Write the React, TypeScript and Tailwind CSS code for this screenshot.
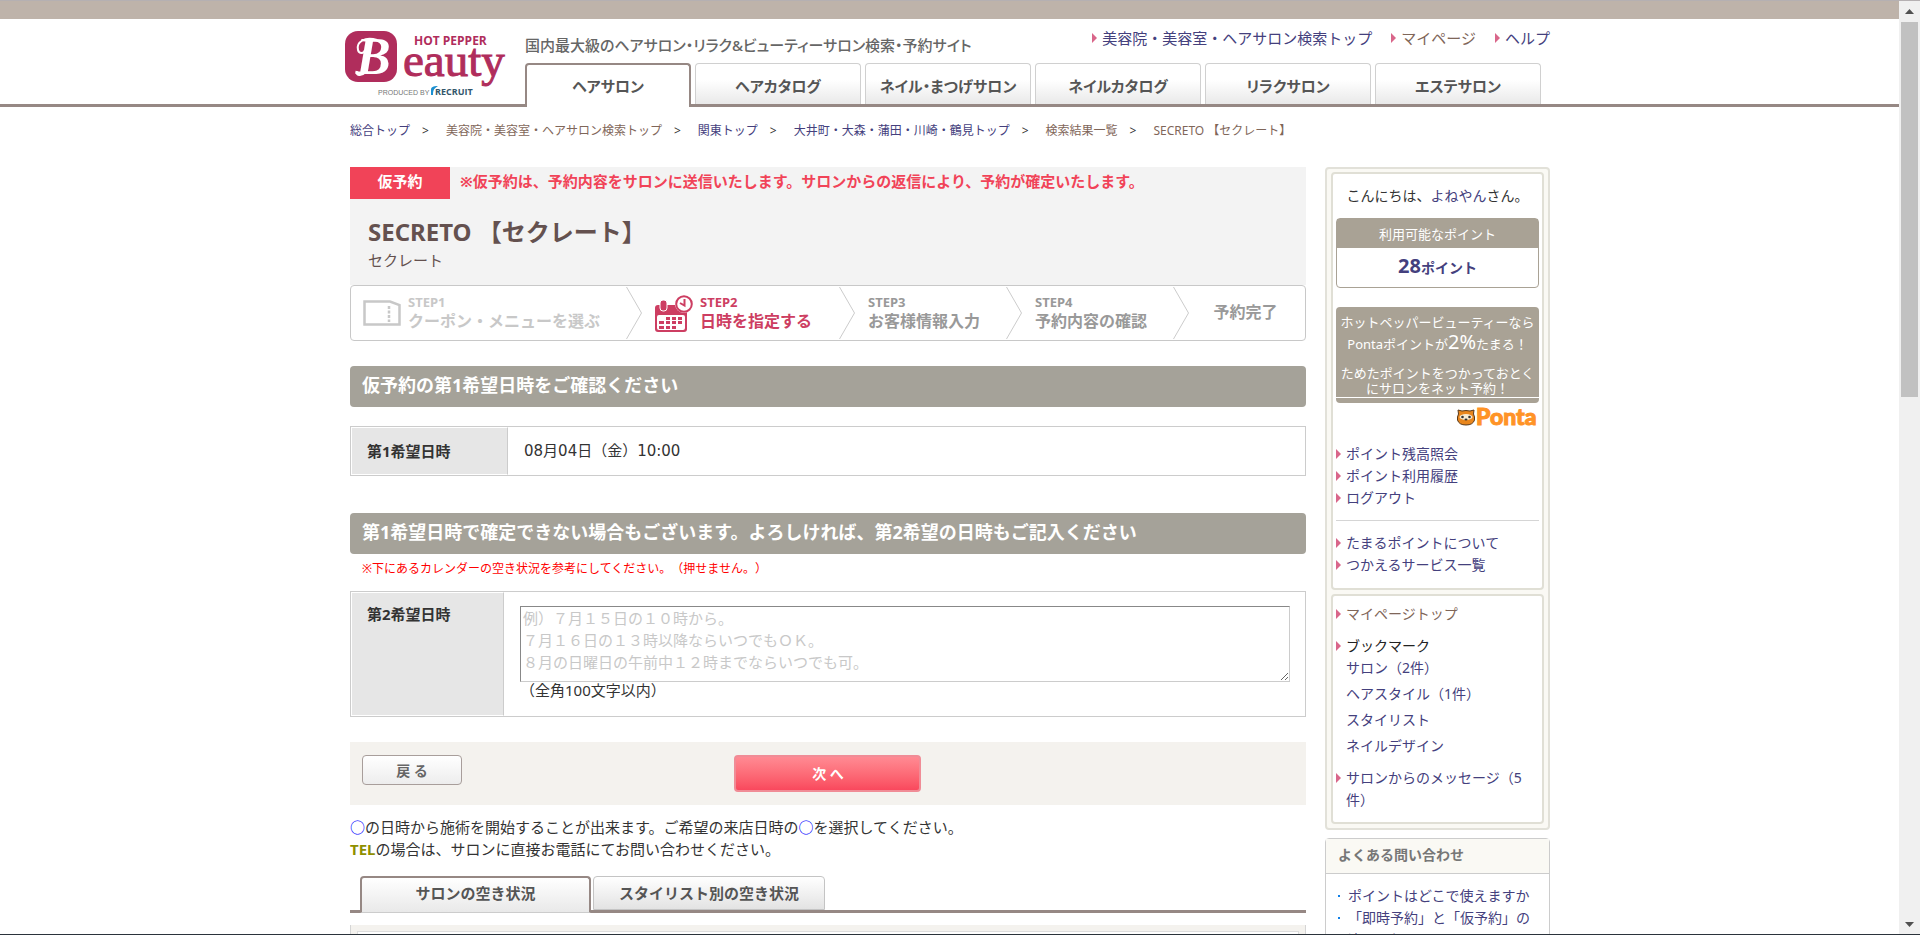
import React from 'react'
import clsx from 'clsx'

const NAV_TABS = [
  'ヘアサロン',
  'ヘアカタログ',
  'ネイル・まつげサロン',
  'ネイルカタログ',
  'リラクサロン',
  'エステサロン',
]

const CRUMBS = [
  { label: '総合トップ', visited: false },
  { label: '美容院・美容室・ヘアサロン検索トップ', visited: true },
  { label: '関東トップ', visited: false },
  { label: '大井町・大森・蒲田・川崎・鶴見トップ', visited: false },
  { label: '検索結果一覧', visited: true },
  { label: 'SECRETO 【セクレート】', visited: true },
]

const PLACEHOLDER = `例）７月１５日の１０時から。
７月１６日の１３時以降ならいつでもＯＫ。
８月の日曜日の午前中１２時までならいつでも可。`

const Arrow = () => (
  <svg width="5" height="10" viewBox="0 0 5 10" className="shrink-0" aria-hidden="true">
    <path d="M0 0L5 5L0 10Z" fill="#d9668a" />
  </svg>
)

const Logo = () => (
  <svg width="166" height="70" viewBox="0 0 166 70" role="img" aria-label="HOT PEPPER Beauty">
    <rect x="0" y="3" width="52" height="51" rx="13" fill="#b02d5c" />
    <text x="11" y="46" fontFamily="Liberation Serif, serif" fontSize="52" fontWeight="700" fontStyle="italic" fill="#fff">B</text>
    <path d="M32 12C20 8 11 14 13 22C14 26 19 26 20 22" fill="none" stroke="#fff" strokeWidth="2" />
    <path d="M20 44C16 48 11 47 12 43" fill="none" stroke="#fff" strokeWidth="3" />
    <text x="69" y="17" fontFamily="Open Sans, sans-serif" fontSize="12" fontWeight="700" fill="#b02d5c">HOT PEPPER</text>
    <text x="58" y="48" fontFamily="Liberation Serif, serif" fontSize="47" fill="#b02d5c" stroke="#b02d5c" strokeWidth="1">eauty</text>
    <text x="33" y="67" fontFamily="Liberation Sans, sans-serif" fontSize="7" fill="#777">PRODUCED BY</text>
    <path d="M86 67V62C86 59 88 58 93 58C90 60 88 61 88 67Z" fill="#1a8fd0" />
    <text x="90" y="67" fontFamily="Open Sans, sans-serif" fontSize="9" fontWeight="700" fill="#33566b">RECRUIT</text>
  </svg>
)

const CouponIcon = () => (
  <svg width="38" height="26" viewBox="0 0 38 26" aria-hidden="true">
    <path d="M1.5 1.5H27L36.500 5V24.500H1.5Z" fill="none" stroke="#c8c8c8" strokeWidth="2.500" />
    <path d="M26 6V22" stroke="#c8c8c8" strokeWidth="2.500" strokeDasharray="3 1.500" />
  </svg>
)

const CalendarIcon = () => (
  <svg width="38" height="37" viewBox="0 0 38 37" aria-hidden="true">
    <rect x="0" y="10" width="32" height="27" rx="3" fill="#cd3e62" />
    <rect x="5" y="5" width="7" height="11" rx="3" fill="#cd3e62" stroke="#fff" strokeWidth="1" />
    <rect x="2" y="20" width="28" height="15" rx="2" fill="#fff" />
    <g fill="#cd3e62">
      <path d="M11 22h4v3h-4zM17 22h4v3h-4zM23 22h4v3h-4z" />
      <path d="M4 26h5v3H4zM11 26h4v3h-4zM17 26h4v3h-4zM23 26h4v3h-4z" />
      <path d="M4 31h5v3H4zM11 31h4v3h-4zM17 31h4v3h-4z" />
    </g>
    <circle cx="29" cy="9" r="9" fill="#fff" />
    <circle cx="29" cy="9" r="7.800" fill="#fff" stroke="#cd3e62" strokeWidth="2" />
    <path d="M29.500 4V10.500L25 8" fill="none" stroke="#cd3e62" strokeWidth="2" />
  </svg>
)

const Chevron = () => (
  <svg width="16" height="52" viewBox="0 0 16 52" className="shrink-0" aria-hidden="true">
    <path d="M0.500 0L15.500 26L0.500 52" fill="none" stroke="#ccc" />
  </svg>
)

const PontaLogo = () => (
  <svg width="82" height="18" viewBox="0 0 82 18" className="overflow-visible" role="img" aria-label="Ponta">
    <path d="M1 1L5 2Q9 1 13 2L17 1L16.500 5Q18 8 17.500 11Q16 16 9 16Q2 16 0.500 11Q0 8 1.500 5Z" fill="#e8861d" stroke="#5a3a1a" />
    <ellipse cx="9" cy="8" rx="6.500" ry="3" fill="#f8ead0" />
    <circle cx="5.500" cy="8" r="1.300" fill="#333" />
    <circle cx="12.500" cy="8" r="1.300" fill="#333" />
    <ellipse cx="9" cy="10.500" rx="1.500" ry="1" fill="#333" />
    <text x="19" y="16" fontFamily="Lato, sans-serif" fontSize="23" fontWeight="900" fill="#ff9326" stroke="#ff9326">Ponta</text>
  </svg>
)

const Step = ({ step, label, className }: { step: string; label: string; className?: string }) => (
  <div className={clsx('pb-[2px] font-bold', className)}>
    <p className="text-[13px] leading-[18px]">{step}</p>
    <p className="text-[16px] leading-5">{label}</p>
  </div>
)

const Heading = ({ children }: { children: React.ReactNode }) => (
  <h2 className="rounded bg-[#a5a299] px-3 pt-2 pb-[11px] text-[18px] font-bold leading-[22px] text-white">{children}</h2>
)

const SideLink = ({ children, className }: { children: React.ReactNode; className?: string }) => (
  <li className="flex gap-[5px]">
    <span className="flex h-[22px] items-center">
      <Arrow />
    </span>
    <a href="#" className={clsx('hover:underline', className)}>{children}</a>
  </li>
)

const Header = () => (
  <header className="border-b-[3px] border-[#968884] pl-px">
    <div className="mx-auto flex max-w-[1210px]">
      <a href="#" className="w-[180px] shrink-0 pt-[9px]">
        <Logo />
      </a>
      <div className="flex-1">
        <div className="flex h-11 justify-between pr-[5px] leading-[22px]">
          <p className="pt-[15px] text-[15px] font-medium text-[#666] [font-feature-settings:'palt']">
            国内最大級のヘアサロン・リラク&ビューティーサロン検索・予約サイト
          </p>
          <nav className="flex gap-[19px] pt-2 text-[15px] text-[#44407d]">
            <a href="#" className="flex h-[22px] items-center gap-[5px]"><Arrow />美容院・美容室・ヘアサロン検索トップ</a>
            <a href="#" className="flex h-[22px] items-center gap-[5px] text-[#7f6659]"><Arrow />マイページ</a>
            <a href="#" className="flex h-[22px] items-center gap-[5px]"><Arrow />ヘルプ</a>
          </nav>
        </div>
        <nav className="-mb-[3px] flex items-start gap-1">
          {NAV_TABS.map((tab, i) => (
            <a
              key={tab}
              href="#"
              className={clsx(
                'flex w-[166px] justify-center rounded-t text-[15px] font-bold leading-[22px] text-[#555] [font-feature-settings:"palt"]',
                i === 0
                  ? 'h-11 border-x-2 border-t-2 border-[#968884] bg-white pt-[10px]'
                  : 'h-[41px] border-x border-t border-[#d0d0d0] bg-linear-to-b from-white from-40% to-[#e9e9e9] pt-[11px]'
              )}
            >
              {tab}
            </a>
          ))}
        </nav>
      </div>
    </div>
  </header>
)

const Breadcrumb = () => (
  <nav className="flex pt-[14px] text-[12px] leading-5 text-[#44407d]">
    {CRUMBS.map((c, i) => (
      <React.Fragment key={c.label}>
        {i > 0 && <span className="pr-[17px] pl-3 text-[#333]">&gt;</span>}
        <a href="#" className={c.visited ? 'text-[#7f6659]' : ''}>{c.label}</a>
      </React.Fragment>
    ))}
  </nav>
)

const Main = () => (
  <main className="min-w-0 flex-1">
    <section className="h-[118px] bg-[#f3f3f3]">
      <div className="flex text-[15px] font-bold leading-7 text-[#f14358]">
        <p className="h-8 w-[100px] bg-[#f14358] text-center text-white">仮予約</p>
        <p className="pl-[10px]">※仮予約は、予約内容をサロンに送信いたします。サロンからの返信により、予約が確定いたします。</p>
      </div>
      <div className="px-[18px] pt-[17px] text-[#64514f]">
        <h1 className="text-[24px] font-bold leading-8">SECRETO 【セクレート】</h1>
        <p className="text-[15px] leading-6">セクレート</p>
      </div>
    </section>

    <section className="flex h-14 items-center rounded border border-[#c8c8c8] bg-white">
      <div className="flex w-[275px] items-center gap-[7px] pl-3 text-[#c8c8c8]">
        <CouponIcon />
        <Step step="STEP1" label="クーポン・メニューを選ぶ" />
      </div>
      <Chevron />
      <div className="flex w-[197px] items-center gap-[7px] pl-[13px] text-[#cd3e62]">
        <CalendarIcon />
        <Step step="STEP2" label="日時を指定する" />
      </div>
      <Chevron />
      <Step step="STEP3" label="お客様情報入力" className="w-[151px] pl-[13px] text-[#999]" />
      <Chevron />
      <Step step="STEP4" label="予約内容の確認" className="w-[151px] pl-[13px] text-[#999]" />
      <Chevron />
      <p className="flex-1 pr-[3px] pb-[2px] text-center text-[16px] font-bold leading-[22px] text-[#999]">予約完了</p>
    </section>

    <form className="pt-[25px]" onSubmit={(e) => e.preventDefault()}>
      <Heading>仮予約の第1希望日時をご確認ください</Heading>
      <table className="mt-[19px] w-full border-separate border-spacing-0 border border-[#ccc] text-[15px] leading-[22px]">
        <tbody>
          <tr>
            <th className="w-[157px] border border-white border-r-[#ccc] bg-[#e6e6e6] py-3 pl-[15px] text-left font-bold">第1希望日時</th>
            <td className="pl-4 font-['DejaVu_Sans','Noto_Sans_CJK_JP',sans-serif]">08月04日（金）10:00</td>
          </tr>
        </tbody>
      </table>

      <div className="pt-[37px]">
        <Heading>第1希望日時で確定できない場合もございます。よろしければ、第2希望の日時もご記入ください</Heading>
      </div>
      <p className="pt-1 pl-3 text-[12px] leading-[22px] text-[#f00]">※下にあるカレンダーの空き状況を参考にしてください。（押せません。）</p>
      <table className="mt-[11px] w-full border-separate border-spacing-0 border border-[#ccc] text-[15px] leading-[22px]">
        <tbody>
          <tr className="align-top">
            <th className="w-[153px] border border-white border-r-[#ccc] bg-[#e6e6e6] pt-[10px] pl-[15px] text-left font-bold">
              <label htmlFor="second">第2希望日時</label>
            </th>
            <td className="pt-[14px] pr-[15px] pb-[15px] pl-4">
              <textarea
                id="second"
                placeholder={PLACEHOLDER}
                className="block h-[76px] w-full border border-[#ccc] border-t-[#888] border-l-[#888] px-[2px] placeholder:text-[#c8c8c8]"
              />
              <p className="-mt-[3px]">（全角100文字以内）</p>
            </td>
          </tr>
        </tbody>
      </table>

      <div className="mt-[25px] grid h-[63px] grid-cols-3 items-start bg-[#f4f2ee] px-3 pt-[13px] font-bold">
        <button type="button" className="h-[30px] w-[100px] rounded border border-[#a89e9b] bg-linear-to-b from-white to-[#ededed] text-[14px] text-[#666]">戻 る</button>
        <button type="submit" className="h-[37px] w-[187px] justify-self-center rounded border-2 border-[#f08c96] bg-linear-to-b from-[#ff8a93] to-[#f9485d] text-[14px] text-white">次 へ</button>
      </div>
    </form>

    <div className="pt-[11px] text-[15px] leading-[22px]">
      <p><span className="text-[#00f]">○</span>の日時から施術を開始することが出来ます。ご希望の来店日時の<span className="text-[#00f]">○</span>を選択してください。</p>
      <p><b className="text-[#8f8f00]">TEL</b>の場合は、サロンに直接お電話にてお問い合わせください。</p>
    </div>

    <div className="mt-4 flex h-[37px] items-start gap-[2px] border-b-[3px] border-[#968884] pl-[10px] text-[15px] font-bold leading-[22px] text-[#555]">
      <button type="button" className="h-[37px] w-[231px] shrink-0 rounded-t border-x-2 border-t-2 border-b border-[#968884] border-b-[#ccc] bg-linear-to-b from-white to-[#e9e9e9] pb-1">サロンの空き状況</button>
      <button type="button" className="h-[34px] w-[232px] shrink-0 rounded-t border border-[#c4c4c4] bg-linear-to-b from-white to-[#e3e3e3]">スタイリスト別の空き状況</button>
    </div>
    <div className="mt-3 h-40 border border-t-0 border-[#d5d5d5] bg-[#f4f2ee] p-[6px]">
      <div className="h-full border border-[#ddd] bg-white" />
    </div>
  </main>
)

const Sidebar = () => (
  <aside className="w-[225px] shrink-0 text-[14px] leading-[22px] text-[#44407d]">
    <div className="flex flex-col gap-1 rounded border-2 border-[#e2e1d9] bg-[#faf9f4] px-1 pt-[3px] pb-1">
      <div className="rounded border-2 border-[#e0dfd5] bg-white px-[3px] pt-[11px] pb-3">
        <p className="text-center text-[#333]">こんにちは、<a href="#" className="text-[#44407d]">よねやん</a>さん。</p>
        <div className="mt-[11px] rounded border border-[#a9a295] text-center">
          <p className="bg-[#a9a295] pt-1 pb-[3px] text-[13px] text-white">利用可能なポイント</p>
          <p className="pt-2 pb-[7px] font-bold leading-6"><span className="text-[20px] leading-none">28</span>ポイント</p>
        </div>
        <div className="mt-[19px] h-24 rounded bg-[#a9a295] pt-[5px] text-center text-[13px] text-white">
          <p className="leading-5">ホットペッパービューティーなら</p>
          <p className="leading-5">Pontaポイントが<span className="text-[20px] leading-none">2%</span>たまる！</p>
          <p className="border-b border-white pt-3 pb-px leading-[15px]">ためたポイントをつかっておとく<br />にサロンをネット予約！</p>
        </div>
        <div className="flex justify-end pt-[6px]">
          <PontaLogo />
        </div>
        <ul className="mt-4 border-b border-[#d5d5d5] pb-[11px]">
          <SideLink>ポイント残高照会</SideLink>
          <SideLink>ポイント利用履歴</SideLink>
          <SideLink>ログアウト</SideLink>
        </ul>
        <ul className="pt-[11px]">
          <SideLink>たまるポイントについて</SideLink>
          <SideLink>つかえるサービス一覧</SideLink>
        </ul>
      </div>
      <ul className="rounded border-2 border-[#e0dfd5] bg-white px-[3px] pt-[7px] pb-[11px]">
        <SideLink className="text-[#7f6659]">マイページトップ</SideLink>
        <li className="pt-[10px]">
          <div className="flex gap-[5px] text-[#222]">
            <span className="flex h-[22px] items-center"><Arrow /></span>
            ブックマーク
          </div>
          <ul className="flex flex-col gap-1 pb-[10px] pl-[10px]">
            <li><a href="#">サロン（2件）</a></li>
            <li><a href="#">ヘアスタイル（1件）</a></li>
            <li><a href="#">スタイリスト</a></li>
            <li><a href="#">ネイルデザイン</a></li>
          </ul>
        </li>
        <SideLink>サロンからのメッセージ（5件）</SideLink>
      </ul>
    </div>

    <div className="mt-2 rounded-t border border-[#ccc]">
      <h3 className="border-b border-[#ccc] bg-[#faf9f4] px-3 pt-[5px] pb-[7px] font-bold text-[#777]">よくある問い合わせ</h3>
      <ul className="px-3 pt-[11px]">
        {['ポイントはどこで使えますか', '「即時予約」と「仮予約」の違いは何ですか'].map((q) => (
          <li key={q} className="flex gap-2">
            <span className="mt-[10px] h-[2px] w-[2px] shrink-0 bg-[#1080e8]" />
            <a href="#">{q}</a>
          </li>
        ))}
      </ul>
    </div>
  </aside>
)

const ScrollTrack = () => (
  <div className="flex w-[21px] shrink-0 flex-col items-center justify-between bg-[#f0f0f0] pt-2 pb-[7px]" aria-hidden="true">
    <div className="flex flex-col items-center gap-2">
      <svg width="9" height="5" viewBox="0 0 9 5"><path d="M0 5L4.500 0L9 5Z" fill="#505050" /></svg>
      <div className="h-[375px] w-[17px] bg-[#c1c1c1]" />
    </div>
    <svg width="9" height="5" viewBox="0 0 9 5"><path d="M0 0L4.500 5L9 0Z" fill="#505050" /></svg>
  </div>
)

const App = () => {
  return (
    <div className="flex h-screen flex-col overflow-hidden border-t border-b border-t-[#b5b0b2] border-b-[#2b333b] bg-white font-['Noto_Sans','Noto_Sans_CJK_JP',sans-serif] text-[#333] [text-spacing-trim:space-all]">
      <div className="flex min-h-0 flex-1">
        <div className="min-w-0 flex-1 overflow-hidden">
          <div className="h-[18px] bg-[#beb3aa]" />
          <Header />
          <div className="pl-px">
            <div className="mx-auto max-w-[1200px]">
              <Breadcrumb />
              <div className="mt-[26px] flex items-start gap-[19px]">
                <Main />
                <Sidebar />
              </div>
            </div>
          </div>
        </div>
        <ScrollTrack />
      </div>
    </div>
  )
}

export default App
